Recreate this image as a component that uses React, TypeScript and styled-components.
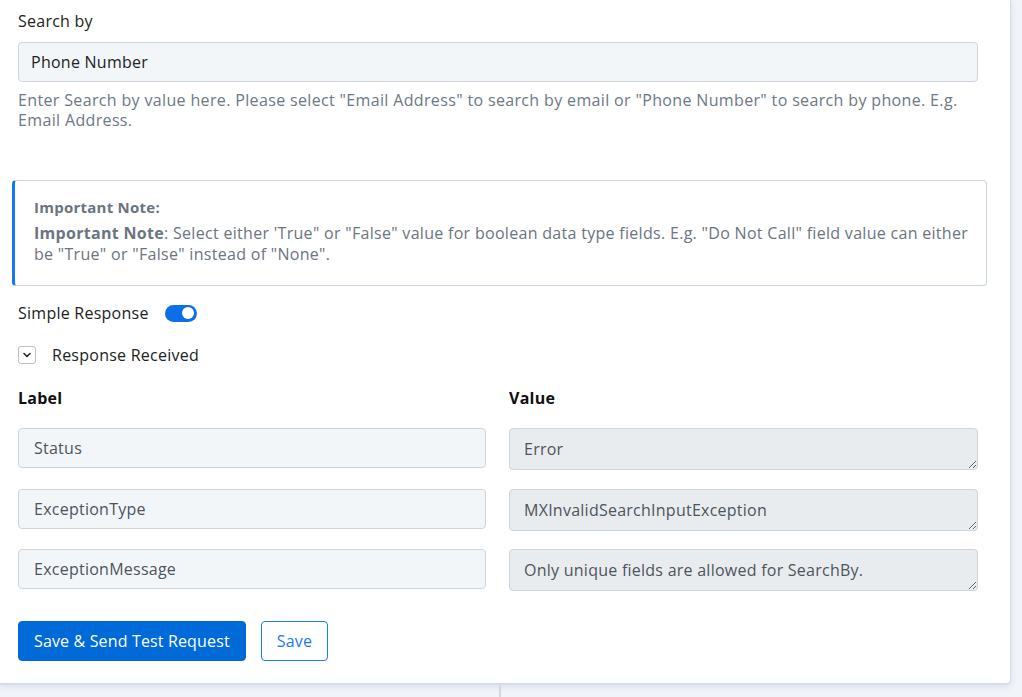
import styled, { createGlobalStyle } from 'styled-components'
import { ChevronDown } from 'lucide-react'

const Global = createGlobalStyle`
  html, body { margin:0; padding:0; background:#f1f4f9; }
  body { font-family:"Open Sans", "Noto Sans", Arial, sans-serif; color:#212529; letter-spacing:0.25px; }
  * { box-sizing:border-box; }
`

const Page = styled.div`width:1022px; height:697px; overflow:hidden; display:flex; flex-direction:column;`
const Card = styled.div`
  width:1011px; height:685px; flex:none; background:#fff;
  border-right:1px solid #d3ddf0; border-bottom:2px solid #d3ddf0;
  border-bottom-right-radius:5px;
  box-shadow:0 2px 6px rgba(150,170,200,.25);
  padding:11px 0 0 18px;
`
const Footer = styled.div`flex:1; display:flex;`
const FooterLine = styled.div`margin-left:499px; width:2px; background:#d4d8de;`

const FieldLabel = styled.div`font-size:16px; line-height:20px; color:#222;`
const Input = styled.div<{pad?:number}>`
  width:960px; height:40px; margin-top:11px; display:flex; align-items:center;
  padding:0 ${p=>p.pad ?? 12}px; background:#f3f6f9; border:1px solid #cfd5dd; border-radius:4px;
  font-size:16px; color:#222;
`
const Help = styled.div`margin-top:8px; width:960px; font-size:16px; line-height:20px; color:#6c7886; letter-spacing:0.35px;`

const Note = styled.div`
  margin:50px 0 0 -6px; width:975px; padding:16px 6px 20px 19px;
  border:1px solid #c9d3e1; border-left:3px solid #1479f0; border-radius:4px;
  color:#6b7480; line-height:21px;
`
const NoteTitle = styled.div`font-weight:700; font-size:15px;`
const NoteBody = styled.div`margin-top:5px; font-size:16px; letter-spacing:0.3px;`

const Row = styled.div<{mt:number}>`display:flex; align-items:center; margin-top:${p=>p.mt}px; height:20px; font-size:16px; color:#222;`
const Toggle = styled.span`
  margin-left:16px; width:32px; height:17px; border-radius:9px; background:#0a6fe8;
  display:inline-flex; align-items:center; justify-content:flex-end; padding-right:3px;
  &::after { content:''; width:12px; height:12px; border-radius:50%; background:#fff; }
`
const ChevBox = styled.span`
  width:18px; height:18px; border:1px solid #b9c0c9; border-radius:3px;
  display:inline-flex; align-items:center; justify-content:center; margin-right:16px; color:#222;
`

const Grid = styled.div`
  margin-top:23px; width:960px; display:grid; grid-template-columns:468px 469px; column-gap:23px; row-gap:18.5px;
  align-items:start;
`
const ColHead = styled.div`font-weight:700; font-size:16px; line-height:20px; color:#111; margin-bottom:1.5px;`
const LabelBox = styled.div`
  height:40px; display:flex; align-items:center; padding:0 15px;
  background:#f3f6f9; border:1px solid #cfd5dd; border-radius:4px; font-size:16px; color:#4d545c;
`
const ValueBox = styled.textarea`
  display:block; width:100%; height:42px; padding:10px 14px; margin:0;
  background:#e9ecef; border:1px solid #cfd5dd; border-radius:4px; font-family:inherit; letter-spacing:0.25px;
  font-size:16px; line-height:20px; color:#4d545c; resize:vertical; overflow:hidden; outline:none;
`

const Buttons = styled.div`display:flex; gap:15px; margin-top:30px;`
const Btn = styled.button<{primary?:boolean}>`
  height:40px; padding:0 15px; border-radius:4px; font-family:inherit; font-size:16px; cursor:pointer; letter-spacing:0.15px;
  border:1px solid ${p=>p.primary?'#006ad8':'#1a7cf0'};
  background:${p=>p.primary?'#006ad8':'#fff'};
  color:${p=>p.primary?'#fff':'#1a7cf0'};
`

const rows = [
  ['Status', 'Error'],
  ['ExceptionType', 'MXInvalidSearchInputException'],
  ['ExceptionMessage', 'Only unique fields are allowed for SearchBy.'],
]

export default function App() {
  return (
    <Page>
      <Global />
      <Card>
        <FieldLabel>Search by</FieldLabel>
        <Input>Phone Number</Input>
        <Help>
          Enter Search by value here. Please select "Email Address" to search by email or "Phone Number" to search by phone. E.g. Email Address.
        </Help>
        <Note>
          <NoteTitle>Important Note:</NoteTitle>
          <NoteBody>
            <b>Important Note</b>: Select either 'True" or "False" value for boolean data type fields. E.g. "Do Not Call" field value can either be "True" or "False" instead of "None".
          </NoteBody>
        </Note>
        <Row mt={17}>Simple Response<Toggle /></Row>
        <Row mt={22}>
          <ChevBox><ChevronDown size={12} strokeWidth={3} /></ChevBox>
          Response Received
        </Row>
        <Grid>
          <ColHead>Label</ColHead>
          <ColHead>Value</ColHead>
          {rows.map(([l, v]) => (
            <>
              <LabelBox key={l}>{l}</LabelBox>
              <ValueBox key={v} readOnly value={v} />
            </>
          ))}
        </Grid>
        <Buttons>
          <Btn primary>Save &amp; Send Test Request</Btn>
          <Btn>Save</Btn>
        </Buttons>
      </Card>
      <Footer><FooterLine /></Footer>
    </Page>
  )
}
